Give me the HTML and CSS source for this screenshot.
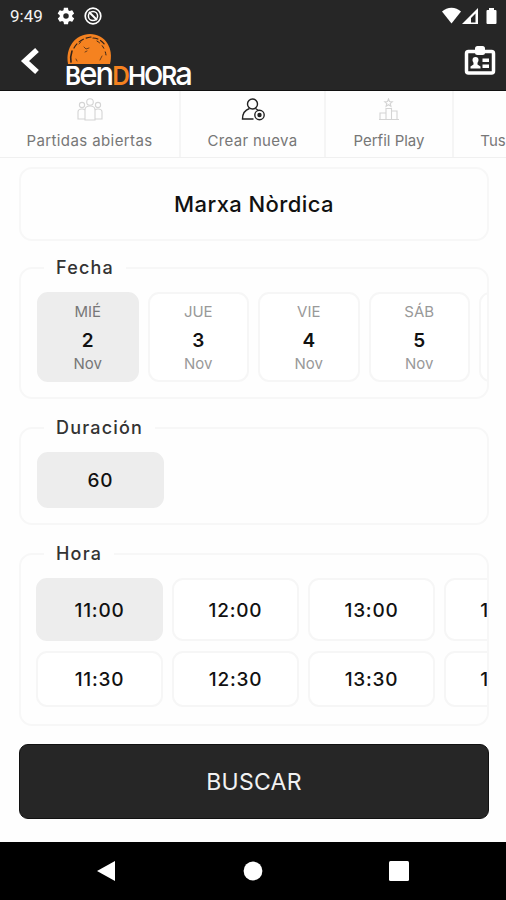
FILE: index.html
```html
<!DOCTYPE html>
<html lang="es">
<head>
  <meta charset="UTF-8">
  <meta name="viewport" content="width=device-width, initial-scale=1.0">
  <title>Bendhora</title>
  <link rel="stylesheet" href="styles.css">
</head>
<body>

<header class="top">
  <div class="status">
    <span class="clock">9:49</span>
    <svg class="gear" width="20" height="20" viewBox="0 0 24 24" fill="#fff"><path d="M19.4 13c0-.3.1-.6.1-1s0-.7-.1-1l2.1-1.6c.2-.2.2-.4.1-.6l-2-3.500c-.1-.2-.4-.3-.6-.2l-2.500 1c-.5-.4-1.100-.7-1.700-1l-.4-2.600c0-.2-.2-.4-.5-.4h-4c-.3 0-.5.2-.5.4l-.4 2.600c-.6.2-1.200.6-1.700 1l-2.500-1c-.2-.1-.5 0-.6.2l-2 3.500c-.1.2-.1.4.1.6L4.500 11c0 .3-.1.700-.1 1s0 .7.1 1l-2.100 1.600c-.2.2-.2.4-.1.6l2 3.500c.1.2.4.3.6.2l2.500-1c.5.4 1.100.7 1.700 1l.4 2.600c0 .2.200.4.500.4h4c.3 0 .5-.2.5-.4l.4-2.600c.6-.3 1.200-.6 1.700-1l2.500 1c.2.1.5 0 .6-.2l2-3.500c.1-.2.1-.5-.1-.6L19.400 13zM12 15.300a3.300 3.300 0 1 1 0-6.600 3.300 3.300 0 0 1 0 6.600z"/></svg>
    <svg class="sync" width="18" height="18" viewBox="0 0 18 18" fill="none" stroke="#fff"><circle cx="9" cy="9" r="7.800" stroke-width="1.700"/><circle cx="9" cy="9" r="4.600" stroke-width="1.500"/><path d="M5 5l8 8" stroke-width="2"/></svg>
    <svg class="signals" width="56" height="18" viewBox="0 0 56 18" fill="#fff"><path d="M0 4.500C5-.6 14-.6 19 4.500L9.500 16.500z"/><path fill-rule="evenodd" d="M20 17L36 1v16zM29 11v4.500h4.500V6.500z"/><path d="M47 1h5v2h1.500q1 0 1 1v12q0 1-1 1h-8q-1 0-1-1V4q0-1 1-1H47z"/></svg>
  </div>
  <div class="bar">
    <svg class="back" width="20" height="28" viewBox="0 0 20 28" fill="none" stroke="#fff" stroke-width="5.500"><path d="M17 3L5 14l12 11"/></svg>
    <svg class="logo" width="130" height="56" viewBox="0 0 130 56">
      <path d="M3 31C0 15 10 1 25 1s24 14 20 30z" fill="#f58220"/>
      <g fill="none" stroke="#33231a" stroke-linecap="round">
        <path d="M6 29c-1-5 0-8 1-11" stroke-width="1.600"/>
        <path d="M9 15c4-7 10-10 17-11M28 5c5 0 9 3 12 7" stroke-width="1.200" stroke-dasharray="5 3"/>
        <path d="M32 8c5 3 8 8 9 14" stroke-width="1" stroke-dasharray="3 4"/>
        <path d="M19 14l2 2 3-1M20 19l2-1M14 11l2-2M37 23l-2 4M11 26l1 2" stroke-width=".7"/>
      </g>
      <text class="logo-text" x="0" y="52" textLength="126" lengthAdjust="spacingAndGlyphs">B<tspan class="small">en</tspan><tspan class="accent">D</tspan>HOR<tspan class="small">a</tspan></text>
    </svg>
    <svg class="badge" width="32" height="30" viewBox="0 0 32 30"><rect x="2.500" y="5.500" width="27" height="21.500" rx="2" fill="none" stroke="#fff" stroke-width="3.500"/><rect x="11" y="0" width="10" height="9" rx="2.500" fill="#fff"/><g fill="#fff"><circle cx="11.500" cy="14" r="3"/><path d="M6.500 22.500v-2l3-2v-3h4v3l3 2v2zM18.500 12.500h6.500v3.500h-6.500zM18.500 18.500h6.500v3.500h-6.500z"/></g></svg>
  </div>
</header>

<nav class="tabs">
  <a class="tab tab-open">
    <svg width="26" height="24" viewBox="0 0 26 24" fill="none" stroke="#d4d4d4" stroke-width="1.100"><circle cx="13" cy="4" r="3.300"/><circle cx="5" cy="7" r="2.600"/><circle cx="21" cy="7" r="2.600"/><path d="M8 22V12c0-3 2-4 5-4s5 1 5 4v10zM8 21H1v-7c0-2 2-3 4-3s2 0 3 1M18 21h7v-7c0-2-2-3-4-3s-2 0-3 1"/></svg>
    <span>Partidas abiertas</span>
  </a>
  <a class="tab tab-new active">
    <svg width="26" height="24" viewBox="0 0 26 24" fill="none" stroke="#222" stroke-width="1.400"><circle cx="12.500" cy="6" r="5"/><path d="M9.500 10.500C5 12 2.500 15 2.500 21h11M15.500 10.500l3 2"/><circle cx="19.500" cy="17" r="4.700"/><circle cx="19.500" cy="17" r="1.500" fill="#222"/></svg>
    <span>Crear nueva</span>
  </a>
  <a class="tab tab-profile">
    <svg width="26" height="24" viewBox="0 0 26 24" fill="none" stroke="#d4d4d4" stroke-width="1.100"><path d="M12.500 1l1 2.500 2.800.2-2.100 1.800.7 2.700-2.400-1.500-2.400 1.500.7-2.700-2.100-1.800 2.800-.2zM3 21.500h20M4 21v-6h6v6M10 21V10.500h5.500V21M15.500 21v-8H21v8"/></svg>
    <span>Perfil Play</span>
  </a>
  <a class="tab tab-yours"><span>Tus</span></a>
</nav>

<main class="content">
  <div class="activity">Marxa Nòrdica</div>

  <fieldset class="group group-date">
    <legend>Fecha</legend>
    <div class="scroller dates">
      <button class="option day selected"><span>MIÉ</span><strong>2</strong><span>Nov</span></button>
      <button class="option day"><span>JUE</span><strong>3</strong><span>Nov</span></button>
      <button class="option day"><span>VIE</span><strong>4</strong><span>Nov</span></button>
      <button class="option day"><span>SÁB</span><strong>5</strong><span>Nov</span></button>
      <button class="option day"></button>
    </div>
  </fieldset>

  <fieldset class="group group-duration">
    <legend>Duración</legend>
    <div class="scroller">
      <button class="option slot selected">60</button>
    </div>
  </fieldset>

  <fieldset class="group group-hour">
    <legend>Hora</legend>
    <div class="scroller hours">
      <button class="option slot selected">11:00</button>
      <button class="option slot">12:00</button>
      <button class="option slot">13:00</button>
      <button class="option slot">14:00</button>
      <button class="option slot">11:30</button>
      <button class="option slot">12:30</button>
      <button class="option slot">13:30</button>
      <button class="option slot">14:30</button>
    </div>
  </fieldset>

  <button class="search">BUSCAR</button>
</main>

<footer class="system-nav">
  <svg width="20" height="22" viewBox="0 0 20 22" fill="#fff"><path d="M1 11L19 1v20z"/></svg>
  <svg width="20" height="20" viewBox="0 0 20 20" fill="#fff"><circle cx="10" cy="10" r="9.400"/></svg>
  <svg width="20" height="20" viewBox="0 0 20 20" fill="#fff"><rect width="20" height="20" rx="1.500"/></svg>
</footer>

</body>
</html>
```

FILE: styles.css
```css
* {
  box-sizing: border-box;
}

body {
  font-family: Inter, 'Open Sans', sans-serif;
  background: #fefefe;
  color: #111;
  margin: 0;
  height: 900px;
  display: flex;
  flex-direction: column;
  overflow: hidden;
}

svg {
  display: block;
  flex: none;
}

button {
  font-family: inherit;
  margin: 0;
  padding: 0;
}

.top {
  height: 91px;
  flex: none;
  background: #262626;
  border-bottom: 1px solid #111;
}

.status {
  height: 32px;
  display: flex;
  align-items: center;
  padding: 0 8px 0 10px;
}

.clock {
  font-family: Roboto, sans-serif;
  font-size: 17px;
  width: 46px;
  color: #f4f4f4;
}

.sync {
  margin-left: 8px;
}

.signals {
  margin-left: auto;
}

.bar {
  height: 58px;
  display: flex;
  align-items: center;
  padding: 0 10px 0 20px;
}

.logo {
  margin-left: 25px;
  overflow: visible;
}

.logo-text {
  font-family: Inter, sans-serif;
  font-size: 26px;
  font-weight: 600;
  letter-spacing: -2px;
  fill: #fff;
}

.logo-text .small {
  font-size: 33px;
  font-weight: 500;
}

.logo-text .accent {
  fill: #f58220;
}

.badge {
  margin-left: auto;
}

.tabs {
  height: 67px;
  flex: none;
  display: flex;
  overflow: hidden;
  border-bottom: 1px solid #f0f0f0;
}

.tab {
  flex: none;
  display: flex;
  flex-direction: column;
  align-items: center;
  justify-content: flex-end;
  padding-bottom: 6px;
  border-right: 2px solid #f5f5f5;
  font-size: 15px;
  line-height: 20px;
  color: #777;
  white-space: nowrap;
}

.tab svg {
  margin-bottom: 9px;
}

.tab-open {
  width: 181px;
  letter-spacing: 0.4px;
}

.tab-new {
  width: 145px;
  letter-spacing: 0.3px;
}

.tab-profile {
  width: 128px;
}

.tab-yours {
  width: 80px;
}

.content {
  flex: 1;
  padding: 9px 17px 0 19px;
  display: flex;
  flex-direction: column;
}

.activity {
  height: 74px;
  border: 2px solid #f7f7f7;
  border-radius: 13px;
  display: flex;
  align-items: center;
  justify-content: center;
  font-size: 22px;
  font-weight: 500;
  letter-spacing: 0.4px;
}

.group {
  min-width: 0;
  margin: 0;
  padding: 0;
  border: 2px solid #f7f7f7;
  border-radius: 13px;
}

.group legend {
  margin-left: 23px;
  padding: 0 12px;
  font-size: 18px;
  line-height: 22px;
  font-weight: 500;
  letter-spacing: 1.2px;
  color: #333;
}

.group-date {
  height: 142px;
  margin-top: 16px;
}

.group-duration {
  height: 108px;
  margin-top: 18px;
}

.group-hour {
  height: 183px;
  margin-top: 18px;
}

.scroller {
  display: flex;
  gap: 9px;
  padding: 13px 0 0 16px;
  overflow: hidden;
}

.option {
  flex: none;
  background: #fff;
  border: 2px solid #f6f6f6;
  border-radius: 11px;
  color: #111;
}

.option.selected {
  background: #ededed;
  border-color: #ededed;
}

.day {
  width: 101.5px;
  height: 90px;
  display: flex;
  flex-direction: column;
  align-items: center;
  font-size: 15px;
  line-height: 20px;
  color: #999;
  padding-top: 8px;
}

.day.selected {
  color: #777;
}

.day strong {
  font-size: 19px;
  font-weight: 600;
  line-height: 24px;
  margin: 7px 0 1px;
  color: #111;
}

.slot {
  width: 127px;
  height: 56px;
  font-size: 19px;
  font-weight: 500;
  letter-spacing: 0.8px;
}

.hours {
  display: grid;
  grid-template-columns: repeat(4, 127px);
  grid-template-rows: 63px 56px;
  gap: 10px 9px;
  padding-left: 15px;
}

.hours .slot {
  height: auto;
  padding-top: 1px;
}

.search {
  height: 75px;
  margin-top: 18px;
  flex: none;
  background: #262626;
  border: 1px solid #111;
  border-radius: 9px;
  color: #f2f2f2;
  font-size: 23px;
  letter-spacing: 0.3px;
}

.system-nav {
  height: 58px;
  flex: none;
  background: #000;
  display: flex;
  align-items: center;
  justify-content: space-between;
  padding: 0 97px 0 96px;
}
```
